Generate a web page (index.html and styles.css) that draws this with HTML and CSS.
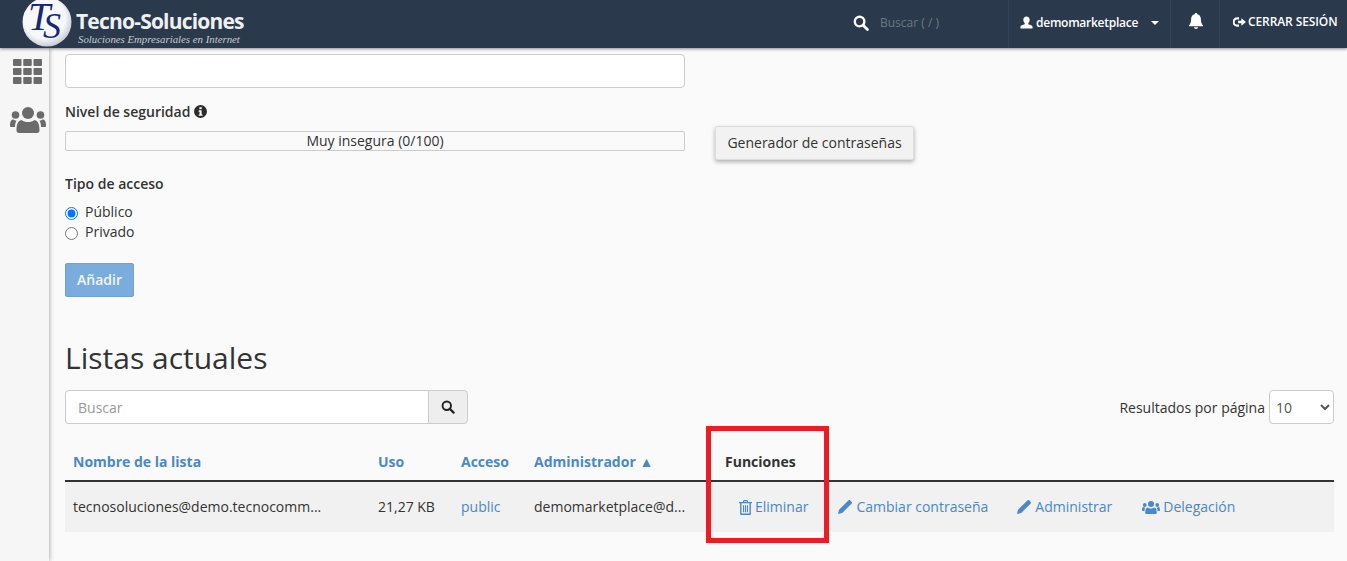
FILE: index.html
```html
<!DOCTYPE html>
<html lang="es">
<head>
<meta charset="utf-8">
<title>Listas de correo</title>
<link rel="stylesheet" href="styles.css">
</head>
<body>
<header class="topbar">
  <div class="brand">
    <svg class="brand-mark" viewBox="0 0 50 50" width="50" height="50">
      <defs><radialGradient id="orb" cx=".45" cy=".42" r=".6"><stop offset=".7" stop-color="#f7f8fb"/><stop offset="1" stop-color="#c3c7d0"/></radialGradient></defs>
      <circle cx="25" cy="25" r="24.5" fill="url(#orb)"/>
      <text x="6" y="33" class="mark-t">T</text>
      <text x="21" y="41" class="mark-s">S</text>
    </svg>
    <div class="brand-text">
      <div class="brand-name">Tecno-Soluciones</div>
      <div class="brand-tag">Soluciones Empresariales en Internet</div>
    </div>
  </div>
  <div class="top-search">
    <svg class="ic-search" viewBox="0 0 16 16" width="16" height="16"><circle cx="6.6" cy="6.6" r="4.8" fill="none" stroke="currentColor" stroke-width="2.4"/><path d="M10 10l4.4 4.4" stroke="currentColor" stroke-width="2.8" stroke-linecap="round"/></svg>
    <span class="top-search-text">Buscar ( / )</span>
  </div>
  <div class="top-user">
    <svg viewBox="0 0 14 14" width="13" height="13"><path d="M7 .5c2.1 0 3.4 1.500 3.400 3.600 0 1.500-.6 2.900-1.500 3.700v1.100c1.800.7 4.600 1.300 4.600 2.600v2H.5v-2c0-1.300 2.800-1.900 4.600-2.600V7.800C4.200 7 3.600 5.600 3.600 4.100 3.600 2 4.900.5 7 .5z" fill="currentColor"/></svg>
    <span class="top-user-name">demomarketplace</span>
    <span class="caret"></span>
  </div>
  <div class="top-bell">
    <svg viewBox="0 0 16 18" width="16" height="17"><path d="M8 0c.8 0 1.300.5 1.300 1.200 2.600.5 3.900 2.500 3.900 5.300 0 3.500 1 5.200 2.300 6.500v1H.5v-1c1.300-1.300 2.300-3 2.300-6.500 0-2.800 1.300-4.800 3.900-5.300C6.700.5 7.200 0 8 0zM5.800 15.200h4.400C10 16.300 9.100 17 8 17s-2-.7-2.200-1.800z" fill="currentColor"/></svg>
  </div>
  <div class="top-logout">
    <svg viewBox="0 0 14 12" width="13" height="12"><path d="M6.500 1H4.500a5 5 0 0 0 0 10h2V8.800H4.600a2.800 2.800 0 0 1 0-5.600h1.900z" fill="currentColor"/><path d="M5.500 4.600h3.500V2L14 6 9 10V7.400H5.500z" fill="currentColor"/></svg>
    <span>CERRAR SESIÓN</span>
  </div>
</header>

<div class="shell">
  <nav class="sidebar">
    <svg viewBox="0 0 29 25" width="29" height="25" class="side-grid">
      <g fill="currentColor">
        <rect x="0" y="0" width="8.500" height="7" rx="1"/><rect x="10.250" y="0" width="8.500" height="7" rx="1"/><rect x="20.500" y="0" width="8.500" height="7" rx="1"/>
        <rect x="0" y="9" width="8.500" height="7" rx="1"/><rect x="10.250" y="9" width="8.500" height="7" rx="1"/><rect x="20.500" y="9" width="8.500" height="7" rx="1"/>
        <rect x="0" y="18" width="8.500" height="7" rx="1"/><rect x="10.250" y="18" width="8.500" height="7" rx="1"/><rect x="20.500" y="18" width="8.500" height="7" rx="1"/>
      </g>
    </svg>
    <svg viewBox="0 0 36 26" width="36" height="26" class="side-users">
      <g fill="currentColor">
        <circle cx="18" cy="6" r="6"/><circle cx="5.500" cy="8" r="3.800"/><circle cx="30.500" cy="8" r="3.800"/>
        <path d="M9 26c-1.500 0-2.500-1-2.500-2.500 0-5 1-10 5-10.500 2 1.500 4 2 6.500 2s4.500-.5 6.500-2c4 .5 5 5.500 5 10.500 0 1.500-1 2.500-2.500 2.500z"/>
        <path d="M0 19c0-4 .8-6.500 3-6.800 1 .8 2 1.300 3.600 1.300C5.600 15 5 17 5 20H1.500C.5 20 0 19.600 0 19zM36 19c0-4-.8-6.500-3-6.800-1 .8-2 1.300-3.600 1.300 1 1.500 1.600 3.500 1.600 6.500h3.500c1 0 1.500-.4 1.500-1z"/>
      </g>
    </svg>
  </nav>

  <main class="content">
    <input class="field" type="password" aria-label="Contraseña">
    <div class="label-row label-security">
      <span class="label">Nivel de seguridad</span>
      <svg viewBox="0 0 14 14" width="13" height="13" class="info"><circle cx="7" cy="7" r="7" fill="currentColor"/><rect x="5.800" y="2.300" width="2.500" height="2.200" fill="#fafafa"/><path d="M5 5.700h3.200v4.400h1v1.500H5v-1.500h1V7.200H5z" fill="#fafafa"/></svg>
    </div>
    <div class="strength-row">
      <div class="strength">Muy insegura (0/100)</div>
      <button class="gen-btn" type="button">Generador de contraseñas</button>
    </div>
    <div class="label label-access">Tipo de acceso</div>
    <label class="radio-line"><input type="radio" name="acc" checked><span>Público</span></label>
    <label class="radio-line"><input type="radio" name="acc"><span>Privado</span></label>
    <button class="add-btn" type="button">Añadir</button>

    <h1 class="title">Listas actuales</h1>

    <div class="tools">
      <div class="searchbox">
        <input class="search-input" type="text" placeholder="Buscar">
        <button class="search-btn" type="button" aria-label="Buscar">
          <svg viewBox="0 0 16 16" width="14" height="14"><circle cx="6.600" cy="6.600" r="4.800" fill="none" stroke="currentColor" stroke-width="2.200"/><path d="M10 10l4.400 4.400" stroke="currentColor" stroke-width="2.600" stroke-linecap="round"/></svg>
        </button>
      </div>
      <div class="perpage">
        <span class="perpage-text">Resultados por página</span>
        <select class="perpage-select"><option>10</option></select>
      </div>
    </div>

    <table class="lists">
      <colgroup><col class="c1"><col class="c2"><col class="c3"><col class="c4"><col></colgroup>
      <thead>
        <tr>
          <th><a>Nombre de la lista</a></th>
          <th><a>Uso</a></th>
          <th><a>Acceso</a></th>
          <th><a>Administrador ▲</a></th>
          <th>Funciones</th>
        </tr>
      </thead>
      <tbody>
        <tr>
          <td>tecnosoluciones@demo.tecnocomm...</td>
          <td>21,27 KB</td>
          <td><a>public</a></td>
          <td>demomarketplace@d...</td>
          <td>
            <div class="actions">
              <a class="act act-del">
                <svg viewBox="0 0 14 16" width="13" height="15"><path d="M5 0h4l1 2h4v1.500h-1.200V15a1 1 0 0 1-1 1H2.200a1 1 0 0 1-1-1V3.500H0V2h4zM5.700 1.300L5.300 2h3.400l-.4-.7zM2.700 3.500v11h8.600v-11zM4.300 5.500h1.200v7.500H4.300zM6.400 5.500h1.200v7.500H6.400zM8.500 5.500h1.200v7.500H8.500z" fill="currentColor" fill-rule="evenodd"/></svg>
                Eliminar</a>
              <a class="act act-pass">
                <svg viewBox="0 0 14 14" width="14" height="14"><path d="M0 14l1-4.200L9.800 1l3.200 3.200L4.200 13zM10.600.3c.5-.4 1.100-.4 1.500 0l1.600 1.600c.4.400.4 1 0 1.500l-.8.800L9.800 1z" fill="currentColor"/></svg>
                Cambiar contraseña</a>
              <a class="act act-admin">
                <svg viewBox="0 0 14 14" width="14" height="14"><path d="M0 14l1-4.200L9.800 1l3.200 3.200L4.200 13zM10.600.3c.5-.4 1.100-.4 1.500 0l1.600 1.600c.4.400.4 1 0 1.500l-.8.800L9.800 1z" fill="currentColor"/></svg>
                Administrar</a>
              <a class="act act-deleg">
                <svg viewBox="0 0 36 26" width="18" height="13"><g fill="currentColor"><circle cx="18" cy="6" r="6"/><circle cx="5.500" cy="8" r="3.800"/><circle cx="30.500" cy="8" r="3.800"/><path d="M9 26c-1.500 0-2.500-1-2.500-2.500 0-5 1-10 5-10.500 2 1.500 4 2 6.500 2s4.500-.5 6.500-2c4 .5 5 5.500 5 10.500 0 1.500-1 2.500-2.500 2.500z"/><path d="M0 19c0-4 .8-6.500 3-6.800 1 .8 2 1.300 3.600 1.300C5.600 15 5 17 5 20H1.500C.5 20 0 19.600 0 19zM36 19c0-4-.8-6.500-3-6.800-1 .8-2 1.300-3.600 1.300 1 1.500 1.600 3.500 1.600 6.500h3.500c1 0 1.500-.4 1.500-1z"/></g></svg>
                Delegación</a>
            </div>
          </td>
        </tr>
      </tbody>
    </table>
  </main>
</div>
<div class="highlight" aria-hidden="true"></div>
</body>
</html>
```
FILE: styles.css
```css
* { box-sizing: border-box; }
html, body { margin: 0; height: 561px; overflow: hidden; }
body {
  position: relative;
  background: #fafafa;
  color: #333;
  font-family: "Open Sans", sans-serif;
  font-size: 14px;
  line-height: 20px;
}

/* top bar */
.topbar {
  position: relative;
  z-index: 2;
  height: 48px;
  background: #2a3a4c;
  color: #fff;
  display: flex;
  align-items: stretch;
  box-shadow: 0 1px 3px rgba(0,0,0,.45);
  overflow: hidden;
}
.brand { display: flex; width: 838px; padding-left: 22px; flex: none; }
.brand-mark { flex: none; margin-top: -3px; }
.mark-t, .mark-s { font-family: "Liberation Serif", serif; font-style: italic; fill: #16267a; }
.mark-t { font-size: 40px; }
.mark-s { font-size: 36px; }
.brand-text { margin-left: 4px; }
.brand-name {
  font-size: 21px;
  font-weight: 700;
  line-height: 24px;
  margin-top: 9px;
  letter-spacing: -.8px;
  color: #eef0f2;
  white-space: nowrap;
}
.brand-tag {
  font-family: "Liberation Serif", serif;
  font-style: italic;
  font-size: 10.8px;
  line-height: 12px;
  margin: 0 0 0 2px;
  color: #c4cad0;
  white-space: nowrap;
}
.top-search { width: 170px; flex: none; display: flex; align-items: center; padding-left: 15px; padding-bottom: 3px; }
.top-search-text { margin-left: 11px; font-size: 12px; color: #6d7883; }
.top-user {
  width: 163px; flex: none; display: flex; align-items: center;
  padding: 0 0 3px 11px;
  border-left: 1px solid #33445a;
  border-right: 1px solid #33445a;
  font-size: 12px; font-weight: 600; letter-spacing: -.25px;
}
.top-user-name { margin-left: 3px; }
.caret { margin-left: 13px; border: 4px solid transparent; border-top-color: #fff; border-bottom: 0; }
.top-bell { width: 49px; flex: none; display: flex; align-items: center; justify-content: center; padding: 0 0 5px 1px; border-right: 1px solid #33445a; }
.top-logout {
  flex: 1; display: flex; align-items: center; gap: 2px;
  padding: 0 0 5px 13px;
  font-size: 12px; font-weight: 600; letter-spacing: -.1px; white-space: nowrap;
}

/* shell */
.shell { display: flex; height: 513px; }
.sidebar {
  width: 49px; flex: none;
  background: #f6f6f6;
  box-shadow: 1px 0 4px rgba(0,0,0,.28);
  color: #6b6b6b;
  display: flex; flex-direction: column; align-items: flex-start;
}
.side-grid { margin: 11px 0 0 13px; }
.side-users { margin: 23px 0 0 10px; }

.content { flex: 1; padding: 6px 13px 0 16px; min-width: 0; }
.field {
  display: block; width: 620px; height: 34px;
  border: 1px solid #ccc; border-radius: 4px; background: #fff;
}
.label-row { display: flex; align-items: center; gap: 4px; }
.label-security { margin-top: 14px; }
.label { font-weight: 600; font-size: 14px; }
.info { color: #2b2b2b; margin-top: -2px; }

.strength-row { display: flex; align-items: flex-start; margin-top: 4px; gap: 30px; }
.strength {
  width: 620px; height: 20px; line-height: 18px; margin-top: 5px;
  border: 1px solid #ccc; border-radius: 2px; text-align: center; background: #fafafa;
}
.gen-btn {
  width: 199px; height: 34px;
  background: #f2f2f2; border: 1px solid #ddd; border-radius: 2px;
  box-shadow: 0 2px 4px rgba(0,0,0,.3);
  font: 14px/20px "Open Sans", sans-serif; color: #333; padding: 0;
}
.label-access { margin-top: 14px; margin-bottom: 8px; line-height: 20px; }
.radio-line { display: flex; align-items: center; height: 20px; }
.radio-line input { margin: 2px 7px 0 0; width: 13px; height: 13px; }
.add-btn {
  display: block; margin-top: 21px;
  width: 69px; height: 34px; padding: 0;
  background: #7aaddd; border: 1px solid #6fa2d2; border-radius: 2px;
  color: #f2f6fa; font: 600 14px/20px "Open Sans", sans-serif;
}
.title { margin: 41px 0 0; font-size: 30px; font-weight: 400; line-height: 40px; color: #333; }

.tools { display: flex; justify-content: space-between; align-items: center; margin-top: 12px; }
.searchbox { display: flex; width: 403px; height: 34px; }
.search-input {
  width: 363px; height: 34px; padding: 0 12px;
  border: 1px solid #ccc; border-right: 0; border-radius: 4px 0 0 4px;
  background: #fff; font: 14px "Open Sans", sans-serif; color: #333;
}
.search-input::placeholder { color: #999; opacity: 1; }
.search-btn {
  width: 40px; height: 34px; padding: 0;
  background: #eee; border: 1px solid #ccc; border-radius: 0 4px 4px 0; color: #222;
  display: flex; align-items: center; justify-content: center;
}
.perpage { display: flex; align-items: center; gap: 4px; }
.perpage-text { padding-top: 2px; }
.perpage-select {
  width: 65px; height: 34px; padding: 0 2px;
  border: 1px solid #ccc; border-radius: 4px; background: #fff;
  font: 14px "Open Sans", sans-serif; color: #555;
}

.lists { width: 100%; table-layout: fixed; border-collapse: collapse; margin-top: 20px; }
.c1 { width: 305px; }
.c2 { width: 83px; }
.c3 { width: 73px; }
.c4 { width: 191px; }
.lists th {
  height: 37px; padding: 0 8px; text-align: left; font-weight: 700;
  border-bottom: 2px solid #333; color: #333;
}
.lists th a { color: #4a88c7; }
.lists td { height: 51px; padding: 0 8px; background: #f1f1f1; white-space: nowrap; }
.lists td a { color: #4a88c7; }
.actions { display: flex; align-items: center; }
.act { display: flex; align-items: center; gap: 4px; }
.act-del { margin-left: 14px; gap: 3px; }
.act-pass { margin-left: 30px; }
.act-admin { margin-left: 29px; }
.act-deleg { margin-left: 30px; gap: 3px; }

.highlight {
  position: absolute; left: 706px; top: 426px;
  width: 123px; height: 117px;
  border: 5px solid #ed1c24;
  pointer-events: none;
}
```
